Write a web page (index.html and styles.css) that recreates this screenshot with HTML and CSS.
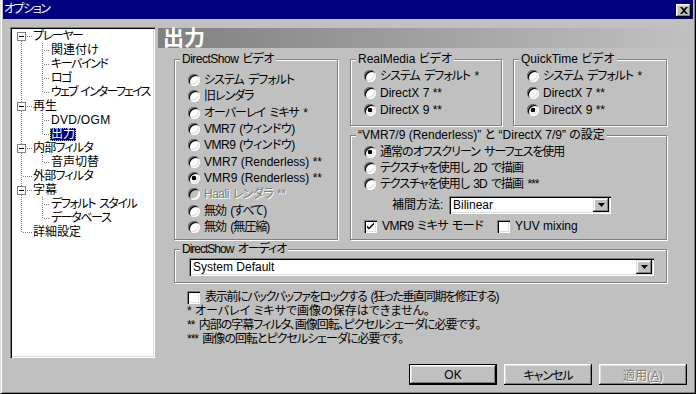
FILE: index.html
```html
<!DOCTYPE html>
<html>
  <head>
    <meta charset="utf-8" />
    <link rel="stylesheet" href="styles.css">
  </head>

  <body>
    <div class="window">
      <div class="titlebar">
        <span class="title">オプション</span>
        <button class="close">
          <svg width="8" height="7" viewBox="0 0 8 7"><path d="M0 0H2L4 2L6 0H8L5 3.5L8 7H6L4 5L2 7H0L3 3.5Z" /></svg>
        </button>
      </div>

      <div class="client">
        <div class="main">
          <div class="tree">
            <div class="node"><svg class="tl a"><use href="#a-first" /></svg><span class="label">プレーヤー</span></div>
            <div class="node"><svg class="tl a"><use href="#a-pass" /></svg><svg class="tl b"><use href="#b-tee" /></svg><span class="label kanji">関連付け</span></div>
            <div class="node"><svg class="tl a"><use href="#a-pass" /></svg><svg class="tl b"><use href="#b-tee" /></svg><span class="label">キーバインド</span></div>
            <div class="node"><svg class="tl a"><use href="#a-pass" /></svg><svg class="tl b"><use href="#b-tee" /></svg><span class="label">ロゴ</span></div>
            <div class="node"><svg class="tl a"><use href="#a-pass" /></svg><svg class="tl b"><use href="#b-end" /></svg><span class="label long">ウェブ インターフェイス</span></div>
            <div class="node"><svg class="tl a"><use href="#a-open" /></svg><span class="label kanji">再生</span></div>
            <div class="node"><svg class="tl a"><use href="#a-pass" /></svg><svg class="tl b"><use href="#b-tee" /></svg><span class="label latin">DVD/OGM</span></div>
            <div class="node"><svg class="tl a"><use href="#a-pass" /></svg><svg class="tl b"><use href="#b-end" /></svg><span class="label kanji selected">出力</span></div>
            <div class="node"><svg class="tl a"><use href="#a-open" /></svg><span class="label mixed">内部フィルタ</span></div>
            <div class="node"><svg class="tl a"><use href="#a-pass" /></svg><svg class="tl b"><use href="#b-end" /></svg><span class="label kanji">音声切替</span></div>
            <div class="node"><svg class="tl a"><use href="#a-tee" /></svg><span class="label mixed">外部フィルタ</span></div>
            <div class="node"><svg class="tl a"><use href="#a-open" /></svg><span class="label kanji">字幕</span></div>
            <div class="node"><svg class="tl a"><use href="#a-pass" /></svg><svg class="tl b"><use href="#b-tee" /></svg><span class="label">デフォルト スタイル</span></div>
            <div class="node"><svg class="tl a"><use href="#a-pass" /></svg><svg class="tl b"><use href="#b-end" /></svg><span class="label">データベース</span></div>
            <div class="node"><svg class="tl a"><use href="#a-end" /></svg><span class="label kanji">詳細設定</span></div>
          </div>

          <div class="panel">
            <div class="page-title">出力</div>

            <div class="groups">
              <div class="group ds-video">
                <div class="group-title half">DirectShow ビデオ</div>
                <div class="options">
                  <div class="opt tight"><span class="radio"></span>システム デフォルト</div>
                  <div class="opt tight"><span class="radio"></span>旧レンダラ</div>
                  <div class="opt tight"><span class="radio"></span>オーバーレイ ミキサ *</div>
                  <div class="opt half"><span class="radio"></span>VMR7 (ウィンドウ)</div>
                  <div class="opt half"><span class="radio"></span>VMR9 (ウィンドウ)</div>
                  <div class="opt"><span class="radio"></span>VMR7 (Renderless) **</div>
                  <div class="opt"><span class="radio on"></span>VMR9 (Renderless) **</div>
                  <div class="opt half disabled"><span class="radio"></span>Haali レンダラ **</div>
                  <div class="opt tight"><span class="radio"></span>無効 (すべて)</div>
                  <div class="opt tight"><span class="radio"></span>無効 (無圧縮)</div>
                </div>
              </div>

              <div class="col-right">
                <div class="rq">
                  <div class="group rm">
                    <div class="group-title">RealMedia ビデオ</div>
                    <div class="options">
                      <div class="opt tight"><span class="radio"></span>システム デフォルト *</div>
                      <div class="opt"><span class="radio"></span>DirectX 7 **</div>
                      <div class="opt"><span class="radio on"></span>DirectX 9 **</div>
                    </div>
                  </div>
                  <div class="group qt">
                    <div class="group-title">QuickTime ビデオ</div>
                    <div class="options">
                      <div class="opt tight"><span class="radio"></span>システム デフォルト *</div>
                      <div class="opt"><span class="radio"></span>DirectX 7 **</div>
                      <div class="opt"><span class="radio on"></span>DirectX 9 **</div>
                    </div>
                  </div>
                </div>

                <div class="group vmr">
                  <div class="group-title">“VMR7/9 (Renderless)” と “DirectX 7/9” の設定</div>
                  <div class="options">
                    <div class="opt tight"><span class="radio on"></span>通常のオフスクリーン サーフェスを使用</div>
                    <div class="opt tight"><span class="radio"></span>テクスチャを使用し 2D で描画</div>
                    <div class="opt tight"><span class="radio"></span>テクスチャを使用し 3D で描画 ***</div>
                  </div>
                  <div class="interp">
                    <span class="interp-label">補間方法:</span>
                    <div class="combo interp-combo">
                      <span class="combo-text">Bilinear</span>
                      <span class="combo-btn"><svg width="7" height="4" viewBox="0 0 7 4"><path d="M0 0H7L3.5 4Z" /></svg></span>
                    </div>
                  </div>
                  <div class="checks">
                    <div class="check half vmr9">
                      <span class="box"><svg width="9" height="9" viewBox="0 0 9 9"><path d="M1 3.5L3 5.5L8 0.5V2.5L3 7.5L1 5.5Z" /></svg></span>VMR9 ミキサ モード
                    </div>
                    <div class="check"><span class="box"></span>YUV mixing</div>
                  </div>
                </div>
              </div>
            </div>

            <div class="group ds-audio">
              <div class="group-title tight">DirectShow オーディオ</div>
              <div class="combo audio-combo">
                <span class="combo-text">System Default</span>
                <span class="combo-btn"><svg width="7" height="4" viewBox="0 0 7 4"><path d="M0 0H7L3.5 4Z" /></svg></span>
              </div>
            </div>

            <div class="check lock"><span class="box"></span>表示前にバックバッファをロックする (狂った垂直同期を修正する)</div>

            <div class="notes">
              <p>* オーバレイ ミキサで画像の保存はできません。</p>
              <p class="tight">** 内部の字幕フィルタ、画像回転、ピクセルシェーダに必要です。</p>
              <p class="tight">*** 画像の回転とピクセルシェーダに必要です。</p>
            </div>
          </div>
        </div>

        <div class="buttons">
          <button class="btn default">OK</button>
          <button class="btn tight">キャンセル</button>
          <button class="btn disabled">適用(<u>A</u>)</button>
        </div>
      </div>
    </div>

    <svg class="defs" width="0" height="0">
      <symbol id="a-pass" viewBox="0 0 20 14"><path d="M9.5 0V14" /></symbol>
      <symbol id="a-tee" viewBox="0 0 20 14"><path d="M9.5 0V14M11 7.5H20" /></symbol>
      <symbol id="a-end" viewBox="0 0 20 14"><path d="M9.5 0V8M11 7.5H20" /></symbol>
      <symbol id="a-first" viewBox="0 0 20 14">
        <path d="M9.5 12V14M15 7.5H20" />
        <rect x="5.5" y="3.5" width="8" height="8" fill="#fff" stroke-dasharray="none" />
        <path d="M7 7.5H12" stroke="#000" stroke-dasharray="none" />
      </symbol>
      <symbol id="a-open" viewBox="0 0 20 14">
        <path d="M9.5 0V3M9.5 12V14M15 7.5H20" />
        <rect x="5.5" y="3.5" width="8" height="8" fill="#fff" stroke-dasharray="none" />
        <path d="M7 7.5H12" stroke="#000" stroke-dasharray="none" />
      </symbol>
      <symbol id="b-tee" viewBox="0 0 18 14"><path d="M10.5 0V14M12 7.5H18" /></symbol>
      <symbol id="b-end" viewBox="0 0 18 14"><path d="M10.5 0V8M12 7.5H18" /></symbol>
    </svg>
  </body>
</html>
```

FILE: styles.css
```css
html,
body {
  margin: 0;
  padding: 0;
}
body {
  font-family: "Liberation Sans", "Noto Sans CJK JP", sans-serif;
  font-size: 12px;
  font-feature-settings: "palt";
  color: #000;
}
button {
  font: inherit;
  font-feature-settings: "palt";
  color: inherit;
  padding: 0;
  border: 0;
  background: #c0c0c0;
}
.defs {
  display: block;
  overflow: hidden;
}

/* kana in the old UI font are narrow, spaces are not */
.tight {
  letter-spacing: -1px;
  word-spacing: 2px;
}
.half {
  letter-spacing: -0.5px;
  word-spacing: 1px;
}

/* window frame */
.window {
  width: 696px;
  height: 394px;
  box-sizing: border-box;
  background: #c0c0c0;
  border-left: 1px solid #dfdfdf;
  border-right: 1px solid #000;
  border-bottom: 1px solid #000;
  box-shadow: inset 1px 0 #fff, inset -1px -1px #808080;
  padding: 0 2px 2px;
  display: flex;
  flex-direction: column;
}
.titlebar {
  height: 19px;
  flex: none;
  background: #000080;
  color: #fff;
  display: flex;
  justify-content: space-between;
  padding-left: 1px;
  line-height: 19px;
}
.title {
  letter-spacing: -1.5px;
}
.close {
  width: 15px;
  height: 13px;
  margin: 4px 2px 0 0;
  box-shadow: inset -1px -1px #000, inset 1px 1px #fff, inset -2px -2px #808080, inset 2px 2px #dfdfdf;
  display: flex;
  align-items: center;
  justify-content: center;
}
.close svg {
  display: block;
}

.client {
  flex: 1;
  display: flex;
  flex-direction: column;
  padding: 8px 6px 0 7px;
}
.main {
  display: flex;
  gap: 3px;
}

/* tree */
.tree {
  width: 145px;
  height: 331px;
  flex: none;
  box-sizing: border-box;
  padding: 2px;
  background: #fff;
  box-shadow: inset 1px 1px #808080, inset 2px 2px #000, inset -1px -1px #fff, inset -2px -2px #dfdfdf;
}
.node {
  display: flex;
  align-items: center;
  height: 14px;
  white-space: nowrap;
}
.tl {
  display: block;
  height: 14px;
  flex: none;
  fill: none;
  stroke: #808080;
  stroke-dasharray: 1 1;
  shape-rendering: crispEdges;
}
.tl.a {
  width: 20px;
}
.tl.b {
  width: 18px;
}
.label {
  padding: 0 1px;
  line-height: 13px;
  letter-spacing: -1.4px;
  word-spacing: 2px;
}
.label.long {
  letter-spacing: -1.8px;
}
.label.mixed {
  letter-spacing: -0.8px;
}
.label.kanji {
  letter-spacing: 0;
}
.label.latin {
  letter-spacing: 0.3px;
}
.label.selected {
  background: #000080;
  color: #fff;
  outline: 1px dotted #c0c080;
  outline-offset: -1px;
}

/* right side */
.panel {
  flex: 1;
  padding-top: 1px;
}
.page-title {
  height: 20px;
  line-height: 20px;
  padding-left: 5px;
  background: linear-gradient(to right, #808080, #c0c0c0);
  color: #fff;
  font-size: 21px;
  font-weight: bold;
}
.groups {
  display: flex;
  gap: 12px;
  margin: 11px 0 0 16px;
}
.group {
  box-sizing: border-box;
  border: 1px solid #808080;
  box-shadow: inset 1px 1px #fff, 1px 1px #fff;
}
.group-title {
  display: table;
  margin: -8px 0 0 5px;
  padding: 0 2px;
  line-height: 14px;
  background: #c0c0c0;
  white-space: nowrap;
}
.ds-video {
  width: 164px;
  height: 181px;
}
.col-right {
  width: 317px;
  display: flex;
  flex-direction: column;
  gap: 9px;
}
.rq {
  display: flex;
  gap: 11px;
}
.rm {
  width: 152px;
  height: 67px;
}
.qt {
  width: 154px;
  height: 67px;
}
.vmr {
  height: 105px;
}
.ds-audio {
  width: 493px;
  height: 34px;
  margin: 9px 0 0 16px;
}

.options {
  display: flex;
  flex-direction: column;
  padding-left: 13px;
}
.ds-video .options {
  padding-top: 6px;
}
.ds-video .opt {
  height: 16.33px;
}
.rm .options,
.qt .options {
  padding-top: 1px;
}
.rm .opt,
.qt .opt {
  height: 17px;
}
.vmr .options {
  padding-top: 2px;
}
.vmr .opt {
  height: 16px;
}
.opt {
  display: flex;
  align-items: center;
  gap: 4px;
  line-height: 14px;
  white-space: nowrap;
}
.radio {
  width: 12px;
  height: 12px;
  flex: none;
  border-radius: 50%;
  background: #fff;
  box-shadow: inset 1px 1px #808080, inset -1px -1px #fff, inset 2px 2px #000, inset -2px -2px #dfdfdf;
}
.radio.on {
  background: radial-gradient(circle, #000 2px, #fff 2.6px);
}
.opt.disabled {
  color: #808080;
  text-shadow: 1px 1px #fff;
}
.opt.disabled .radio {
  background: #c0c0c0;
}

.interp {
  display: flex;
  align-items: center;
  margin: 4px 0 0 41px;
}
.interp-label {
  width: 57px;
  line-height: 14px;
}
.combo {
  display: flex;
  align-items: center;
  height: 18px;
  box-sizing: border-box;
  padding: 2px;
  background: #fff;
  box-shadow: inset 1px 1px #808080, inset 2px 2px #000, inset -1px -1px #fff, inset -2px -2px #dfdfdf;
}
.interp-combo {
  width: 162px;
}
.audio-combo {
  width: 465px;
  margin: 2px 0 0 14px;
  letter-spacing: 0;
  word-spacing: 0;
}
.combo-text {
  flex: 1;
  padding-left: 2px;
  line-height: 14px;
}
.combo-btn {
  width: 16px;
  height: 14px;
  background: #c0c0c0;
  box-shadow: inset -1px -1px #000, inset 1px 1px #dfdfdf, inset -2px -2px #808080, inset 2px 2px #fff;
  display: flex;
  align-items: center;
  justify-content: center;
}
.combo-btn svg {
  display: block;
}

.checks {
  display: flex;
  align-items: center;
  margin: 5px 0 0 13px;
}
.check {
  display: flex;
  align-items: center;
  gap: 5px;
  line-height: 14px;
  white-space: nowrap;
}
.check.vmr9 {
  width: 133px;
}
.box {
  width: 13px;
  height: 13px;
  flex: none;
  box-sizing: border-box;
  background: #fff;
  box-shadow: inset 1px 1px #808080, inset 2px 2px #000, inset -1px -1px #fff, inset -2px -2px #dfdfdf;
  display: flex;
  align-items: center;
  justify-content: center;
}
.box svg {
  display: block;
}
.check.lock {
  margin: 7px 0 0 29px;
  letter-spacing: -1.3px;
  word-spacing: 2px;
}
.notes {
  margin-left: 29px;
}
.notes p {
  margin: 0;
  line-height: 14px;
  white-space: nowrap;
}

/* buttons */
.buttons {
  display: flex;
  justify-content: flex-end;
  gap: 7px;
  margin-top: 6px;
}
.btn {
  width: 88px;
  height: 21px;
  box-sizing: border-box;
  box-shadow: inset -1px -1px #000, inset 1px 1px #fff, inset -2px -2px #808080, inset 2px 2px #dfdfdf;
}
.btn.default {
  border: 1px solid #000;
}
.btn.disabled {
  color: #808080;
  text-shadow: 1px 1px #fff;
}
.btn u {
  text-decoration: underline;
}
```
